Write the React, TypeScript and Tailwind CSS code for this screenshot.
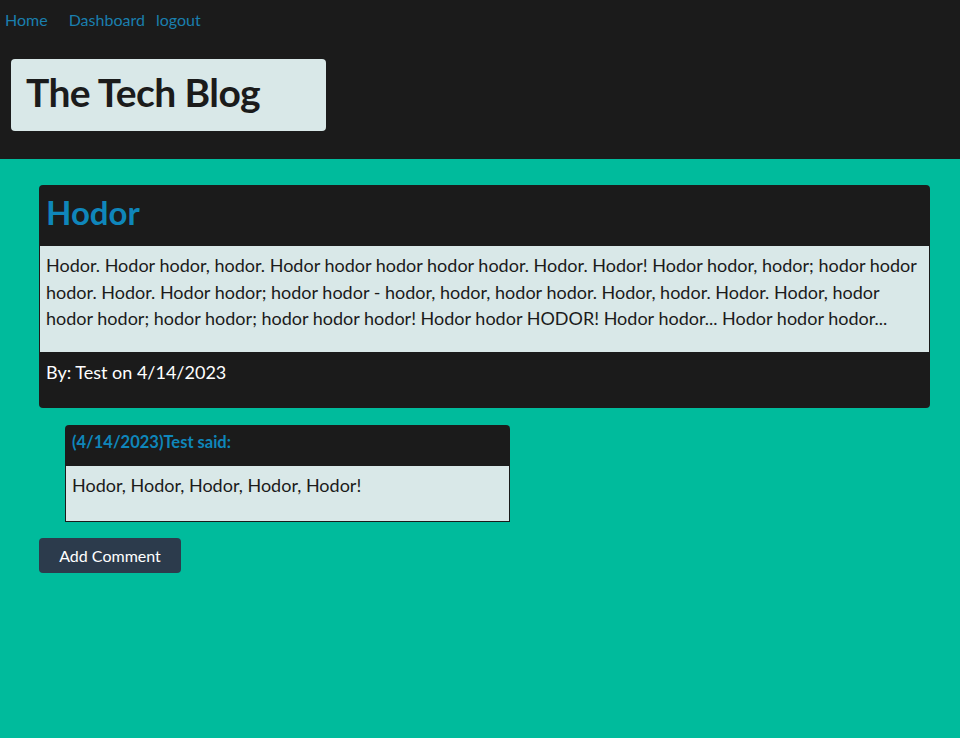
export default function App() {
    return (
        <div className="min-h-[738px] bg-[#00bb9c] font-['Lato',sans-serif] text-[#1b1b1b]">
            <header className="h-[159px] bg-[#1b1b1b]">
                <nav className="flex h-[40px] items-center pl-[5px] text-[16px] text-[#1a7fae]">
                    <a href="#" className="mr-[21px]">Home</a>
                    <a href="#" className="mr-[11px]">Dashboard</a>
                    <a href="#">logout</a>
                </nav>
                <div className="ml-[11px] mt-[19px] flex h-[72px] w-[315px] items-center rounded bg-[#d9e8e8] px-[15px] pb-[5px]">
                    <h1 className="text-[39px] font-bold leading-none tracking-[-0.6px]">The Tech Blog</h1>
                </div>
            </header>
            <main className="px-[30px] pl-[39px] pt-[26px]">
                <article className="w-[891px] overflow-hidden rounded bg-[#1b1b1b]">
                    <h2 className="flex h-[61px] items-center px-[7px] pb-[6px] text-[33px] font-bold text-[#0f86ba]">Hodor</h2>
                    <div className="mx-px h-[106px] bg-[#d9e8e8] px-[6px] pt-[6px]">
                        <p className="text-[18px] leading-[26.5px]">
                            Hodor. Hodor hodor, hodor. Hodor hodor hodor hodor hodor. Hodor. Hodor! Hodor hodor, hodor; hodor hodor hodor. Hodor. Hodor hodor; hodor hodor - hodor, hodor, hodor hodor. Hodor, hodor. Hodor. Hodor, hodor hodor hodor; hodor hodor; hodor hodor hodor! Hodor hodor HODOR! Hodor hodor... Hodor hodor hodor...
                        </p>
                    </div>
                    <p className="h-[56px] px-[7px] pt-[7px] text-[18px] leading-[27px] text-white">By: Test on 4/14/2023</p>
                </article>
                <section className="ml-[26px] mt-[17px] w-[445px] overflow-hidden rounded-t border-b border-[#1b1b1b] bg-[#1b1b1b]">
                    <h3 className="flex h-[41px] items-center px-[7px] pb-[7px] text-[16.5px] font-bold text-[#0f86ba]">(4/14/2023)Test said:</h3>
                    <div className="mx-px h-[55px] bg-[#d9e8e8] px-[6px] pt-[6px]">
                        <p className="text-[18px] leading-[27px]">Hodor, Hodor, Hodor, Hodor, Hodor!</p>
                    </div>
                </section>
                <button className="mt-[16px] h-[35px] w-[142px] rounded bg-[#2c3b4c] text-[16px] text-white">Add Comment</button>
            </main>
        </div>
    );
}
